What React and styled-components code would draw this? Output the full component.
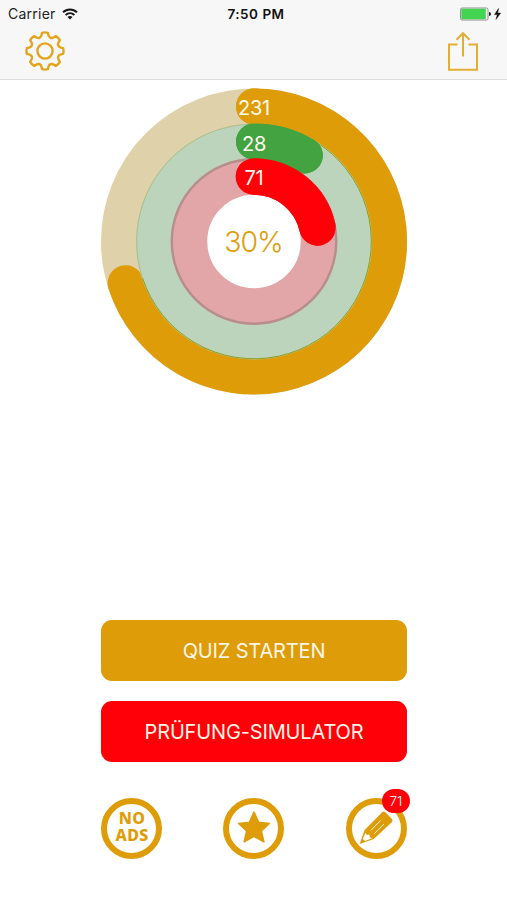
import styled, { createGlobalStyle } from "styled-components";

const GOLD = "#de9c09";
const GREEN = "#42a340";
const RED = "#ff0008";
const TOTAL = 330;

const rings = [
  { value: 231, radius: 135, width: 36, color: GOLD, track: "#dfd1a9", labelY: 26.5 },
  { value: 28, radius: 100, width: 36, color: GREEN, track: "#bbd4bb", labelY: 62 },
  { value: 71, radius: 65, width: 36.5, color: RED, track: "#e3a6a8", labelY: 96 },
];

// clockwise arc from 12 o'clock
function arcPath(radius, value) {
  const angle = (value / TOTAL) * Math.PI * 2;
  const x = 153 + radius * Math.sin(angle);
  const y = 153 - radius * Math.cos(angle);
  return `M153 ${153 - radius}A${radius} ${radius} 0 ${angle > Math.PI ? 1 : 0} 1 ${x} ${y}`;
}

function gearPath() {
  const at = (r, deg) => {
    const a = (deg * Math.PI) / 180;
    return `${(21 + r * Math.sin(a)).toFixed(2)} ${(21 - r * Math.cos(a)).toFixed(2)}`;
  };
  let d = `M${at(18.4, -9)}`;
  for (let i = 0; i < 8; i++) {
    const t = i * 45;
    d += `Q${at(19, t)} ${at(18.4, t + 9)}`;
    d += `L${at(16.3, t + 12)}`;
    d += `C${at(13.8, t + 17)} ${at(13.8, t + 28)} ${at(16.3, t + 33)}`;
    d += `L${at(18.4, t + 36)}`;
  }
  return d + "Z";
}

function ProgressRings() {
  return (
    <Chart viewBox="0 -0.5 306 307">
      {rings.map((r) => (
        <g key={r.value} fill="none" strokeWidth={r.width}>
          <circle cx="153" cy="153" r={r.radius} stroke={r.track} />
          <path d={arcPath(r.radius, r.value)} stroke={r.color} strokeLinecap="round" />
        </g>
      ))}
      <path d={arcPath(117.3, 231)} fill="none" stroke="#8f9d19" strokeWidth="1" />
      <path d="M41.4 189.2A117.3 117.3 0 0 1 153 35.7" fill="none" stroke="#b2bd84" strokeWidth="1" />
      <circle cx="153" cy="153" r="82.2" fill="none" stroke="#b68e8c" strokeWidth="2.4" />
      {rings.map((r) => (
        <path key={r.value} d={arcPath(r.radius, r.value === 231 ? 1 : r.value)} fill="none" stroke={r.color} strokeWidth={r.width} strokeLinecap="round" />
      ))}
      {rings.map((r) => (
        <RingLabel key={r.value} x="153" y={r.labelY}>{r.value}</RingLabel>
      ))}
      <Percent x="152.5" y="163.5">30%</Percent>
    </Chart>
  );
}

export default function App() {
  return (
    <>
      <GlobalStyle />
      <Screen>
        <Header>
          <StatusBar>
            <Carrier>
              Carrier
              <svg width="16" height="12" viewBox="0 0 16 12" fill="none" stroke="#161616">
                <path d="M1 4.3C5 .4 11 .4 15 4.3" strokeWidth="2" />
                <path d="M3.6 7C6.2 4.6 9.8 4.6 12.4 7" strokeWidth="1.9" />
                <path d="M8 11.4L5.5 8.9C7 7.7 9 7.7 10.5 8.9Z" fill="#161616" stroke="none" />
              </svg>
            </Carrier>
            <Time>7:50 PM</Time>
            <Power>
              <svg width="42" height="14" viewBox="0 0 42 14">
                <rect x=".5" y="1" width="27.5" height="12" rx="1.5" fill="#f7f7f7" stroke="#777" strokeWidth=".8" />
                <rect x="1.3" y="1.8" width="24.5" height="10.4" rx=".8" fill="#43d551" />
                <path d="M29 5Q31 5.2 31 7T29 9Z" fill="#222" />
                <path d="M38.5 1.5L34.6 7.6H37.3L36 12.4L40.6 6.1H37.7Z" fill="#111" stroke="#111" strokeWidth=".5" />
              </svg>
            </Power>
          </StatusBar>
          <NavBar>
            <IconButton aria-label="Einstellungen">
              <svg width="42" height="42" viewBox="0 0 42 42" fill="none" stroke="#e2a51d" strokeLinejoin="round">
                <path d={gearPath()} strokeWidth="2.4" />
                <circle cx="21" cy="21" r="7.6" strokeWidth="2.4" />
              </svg>
            </IconButton>
            <IconButton aria-label="Teilen">
              <svg width="32" height="42" viewBox="0 0 32 42" fill="none" stroke="#e5ae32" strokeWidth="2">
                <path d="M10.5 14.5H2V39.8H30V14.5H21.5" />
                <path d="M16 26.5V3.3M9.5 9.8L16 3.2L22.5 9.8" />
              </svg>
            </IconButton>
          </NavBar>
        </Header>
        <Main>
          <ProgressRings />
          <Actions>
            <MainButton $color={GOLD}>QUIZ STARTEN</MainButton>
            <MainButton $color={RED}>PRÜFUNG-SIMULATOR</MainButton>
            <RoundButtons>
              <RoundButton>
                <NoAds>
                  <span>NO</span>
                  <span>ADS</span>
                </NoAds>
              </RoundButton>
              <RoundButton aria-label="Favoriten">
                <svg width="36" height="36" viewBox="0 0 36 36">
                  <path
                    d="M18 2.2L22.5 12.2L33.4 13.5L25.3 20.9L27.8 31.8L18 26.3L8.2 31.8L10.7 20.9L2.6 13.5L13.5 12.2Z"
                    fill={GOLD} stroke={GOLD} strokeWidth="1.6" strokeLinejoin="round"
                  />
                </svg>
              </RoundButton>
              <RoundButton aria-label="Fehler">
                <svg width="42" height="42" viewBox="0 0 42 42">
                  <path d="M4.6 36.9L9.6 22.9L27.2 5.2Q28.8 3.9 30.4 5.3L37 12Q38.2 13.6 37 15L18.8 32Z" fill={GOLD} />
                  <path d="M10.5 25.8L12 27.9L14.5 27.6L14.7 30.2L17 31.2L10.1 33.9L7.8 32Z" fill="#fff" />
                  <path d="M15.8 23.4L25.6 13.6M19.2 26.8L29 17" stroke="#fff" strokeWidth=".9" />
                </svg>
                <Badge>71</Badge>
              </RoundButton>
            </RoundButtons>
          </Actions>
        </Main>
      </Screen>
    </>
  );
}

const GlobalStyle = createGlobalStyle`
  * {
    box-sizing: border-box;
  }
  body {
    margin: 0;
    background: #fff;
    font-family: Inter, "Liberation Sans", sans-serif;
  }
  button {
    font-family: inherit;
    border: 0;
    padding: 0;
    background: none;
  }
  svg {
    display: block;
  }
`;

const Screen = styled.div`
  display: flex;
  flex-direction: column;
  width: 507px;
  height: 900px;
  overflow: hidden;
`;

const Header = styled.header`
  height: 80px;
  background: #f7f7f7;
  border-bottom: 1px solid #dcdcdc;
`;

const StatusBar = styled.div`
  display: grid;
  grid-template-columns: 1fr auto 1fr;
  align-items: center;
  height: 27px;
  padding: 0 5px 0 8px;
  color: #222;
`;

const Carrier = styled.div`
  display: flex;
  align-items: center;
  gap: 6px;
  font-size: 14px;
  letter-spacing: 0.25px;
`;

const Time = styled.div`
  padding-left: 2px;
  font-size: 13.5px;
  font-weight: 600;
  letter-spacing: 0.5px;
  color: #111;
`;

const Power = styled.div`
  display: flex;
  justify-content: flex-end;
`;

const NavBar = styled.nav`
  display: flex;
  justify-content: space-between;
  padding: 3px 28px 0 24px;
`;

const IconButton = styled.button`
  display: flex;
`;

const Main = styled.main`
  flex: 1;
  display: flex;
  flex-direction: column;
  justify-content: space-between;
  align-items: center;
  padding: 8px 0 41.5px 1px;
`;

const Chart = styled.svg`
  width: 306px;
  height: 307px;
`;

const RingLabel = styled.text`
  font-size: 20px;
  font-weight: 400;
  letter-spacing: -0.2px;
  text-anchor: middle;
  fill: #fffbee;
`;

const Percent = styled.text`
  font-size: 28.5px;
  font-weight: 350;
  letter-spacing: -1.1px;
  text-anchor: middle;
  fill: ${GOLD};
`;

const Actions = styled.div`
  display: flex;
  flex-direction: column;
  gap: 19.5px;
  width: 306px;
`;

const MainButton = styled.button`
  height: 61px;
  padding-top: 1.5px;
  border-radius: 11px;
  background: ${(props) => props.$color};
  color: #fff6e6;
  font-size: 20px;
  font-weight: 400;
  letter-spacing: -0.15px;
`;

const RoundButtons = styled.div`
  display: flex;
  justify-content: space-between;
  width: 305.5px;
  padding-top: 16.5px;
`;

const RoundButton = styled.button`
  position: relative;
  display: flex;
  align-items: center;
  justify-content: center;
  width: 61px;
  height: 61px;
  border: 6px solid ${GOLD};
  border-radius: 50%;
`;

const NoAds = styled.span`
  display: flex;
  flex-direction: column;
  align-items: center;
  padding: 0 0 3px 1px;
  font-family: "Noto Sans", sans-serif;
  font-size: 16px;
  font-weight: 800;
  line-height: 16.5px;
  letter-spacing: 0.3px;
  color: ${GOLD};
`;

const Badge = styled.span`
  position: absolute;
  top: -15px;
  right: -9.5px;
  width: 28px;
  height: 24px;
  border-radius: 12px;
  background: ${RED};
  color: #fff;
  font-size: 13.5px;
  font-weight: 300;
  line-height: 24px;
  text-align: center;
`;
